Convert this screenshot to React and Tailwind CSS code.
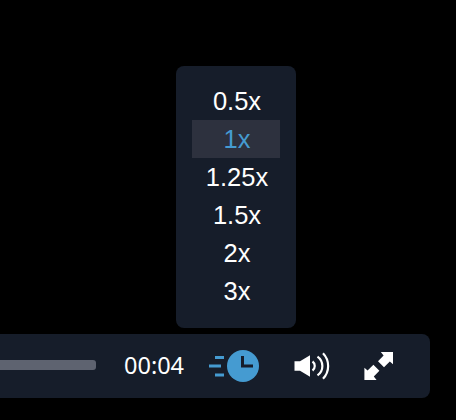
import React, { useState } from "react";

const SPEEDS = ["0.5x", "1x", "1.25x", "1.5x", "2x", "3x"];

const SpeedIcon = () => (
  <svg width="52" height="34" viewBox="0 0 52 34" fill="none">
    <circle cx="35" cy="17" r="16" fill="#459bd1" />
    <path d="M7 8.5h9M1 17h12M7 26h9" stroke="#459bd1" strokeWidth="3" />
    <path d="M34.5 7v10H45" stroke="#161d2a" strokeWidth="3" />
  </svg>
);

const VolumeIcon = () => (
  <svg width="36" height="30" viewBox="0 0 36 30" fill="none">
    <path d="M.5 10.3H6L16 4.3v21.4L6 19.7H.5z" fill="#fff" />
    <path
      d="M18.5 10.5a5.6 5.6 0 0 1 0 9M23.5 5.6a11.5 11.5 0 0 1 0 18.8M29 2.2a18.5 18.5 0 0 1 0 25.6"
      stroke="#fff"
      strokeWidth="2.2"
    />
  </svg>
);

const ExpandIcon = () => (
  <svg width="30" height="28" viewBox="0 0 30 28" fill="#fff">
    <path d="M16.8 0H29v12.2l-3.2-2.8-5.8 5.8-6-6 5.6-5.6z" />
    <path d="M12.6 28H.4V15.8l3.2 2.8 5.8-5.8 6 6-5.6 5.6z" />
  </svg>
);

const SpeedMenu = ({ value, onSelect }) => (
  <div className="absolute bottom-[70px] left-44 w-[120px] h-[262px] p-4 rounded-lg bg-[#161d2a]">
    {SPEEDS.map((speed) => (
      <button
        key={speed}
        onClick={() => onSelect(speed)}
        className={`block w-full h-[38px] pl-0.5 text-[25.5px] leading-[38px] text-center ${
          speed === value ? "bg-[#2d313e] text-[#459bd1]" : "text-white"
        }`}
      >
        {speed}
      </button>
    ))}
  </div>
);

const App = () => {
  const [speed, setSpeed] = useState("1x");

  return (
    <div className="flex flex-col justify-end w-[456px] h-[420px] pb-[22px] bg-black overflow-hidden font-['Liberation_Sans',Arial,sans-serif]">
      <div className="relative flex items-center w-[430px] h-16 rounded-r-lg bg-[#161d2a]">
        {/* Progress */}
        <div className="w-24 h-2.5 mb-0.5 rounded-r-[3px] bg-[#5e6370]" />
        <span className="w-[60px] ml-7 mb-0.5 text-[23.5px] leading-6 whitespace-nowrap text-white font-['Noto_Sans',sans-serif]">
          00:04
        </span>

        {/* Controls */}
        <button className="ml-6">
          <SpeedIcon />
        </button>
        <SpeedMenu value={speed} onSelect={setSpeed} />
        <button className="ml-[34px]">
          <VolumeIcon />
        </button>
        <button className="ml-[34px]">
          <ExpandIcon />
        </button>
      </div>
    </div>
  );
};

export default App;
